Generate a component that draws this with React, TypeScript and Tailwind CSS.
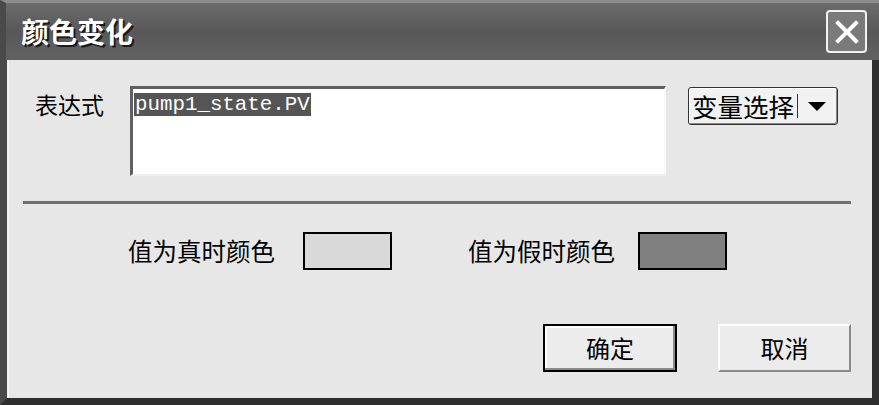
import React from "react";

const cjk = { fontFamily: '"Noto Sans CJK SC", "Noto Sans", sans-serif' };

export default function App() {
  return (
    <div className="w-[879px] h-[405px] flex flex-col bg-[#303030] overflow-hidden" style={cjk}>
      {/* Title bar */}
      <div className="h-[60px] flex items-center justify-between pl-[15px] pr-[12px] border-t-[3px] border-t-[#8c8c8c] border-l-[6px] border-l-[#4a4a4a] bg-gradient-to-b from-[#6c6c6c] via-[#585858] to-[#626262]">
        <span className="text-[28px] font-bold text-white leading-none [text-shadow:2px_2px_0_#1a1a1a] -mt-[2px]">颜色变化</span>
        <div className="w-[41px] h-[43px] rounded-[4px] border-2 border-[#f2f2f2] bg-[#7a7a7a] flex items-center justify-center">
          <svg width="26" height="26" viewBox="0 0 26 26">
            <path d="M4 4 L22 22 M22 4 L4 22" stroke="#ffffff" strokeWidth="4" strokeLinecap="square" />
          </svg>
        </div>
      </div>
      {/* Body */}
      <div className="flex-1 flex border-l-[7px] border-l-[#4a4a4a] border-r-[7px] border-r-[#2e2e2e] border-b-[7px] border-b-[#2e2e2e]">
        <div className="flex-1 bg-[#e7e7e7] border-l-2 border-l-[#f4f4f4] flex flex-col">
          {/* Row 1 */}
          <div className="flex items-start mt-[26px] pl-[26px]">
            <span className="w-[95px] mt-[4px] text-[23px] leading-[28px] text-black">表达式</span>
            <div className="w-[536px] h-[90px] bg-white border-t-[3px] border-l-[3px] border-t-[#606060] border-l-[#606060] border-r-2 border-b-2 border-r-[#f8f8f8] border-b-[#f0f0f0] pl-[1px] pt-[2px]">
              <span className="inline-block bg-[#555555] text-white text-[20.8px] leading-[23px] px-[1px]" style={{ fontFamily: '"Liberation Mono", monospace' }}>pump1_state.PV</span>
            </div>
            <div className="ml-[22px] mt-[1px] w-[150px] h-[38px] rounded-[3px] border border-[#333] bg-[#f2f2f2] shadow-[inset_-1px_-1px_0_#888,inset_1px_1px_0_#fff] flex items-center pl-[3px]">
              <span className="text-[25.5px] leading-none text-black">变量选择</span>
              <span className="w-[1px] h-[24px] bg-[#333] ml-[3px]" />
              <svg className="ml-[10px]" width="18" height="10" viewBox="0 0 18 10">
                <path d="M0 1 L18 1 L9 10 Z" fill="#000" />
              </svg>
            </div>
          </div>
          {/* Separator */}
          <div className="ml-[14px] w-[828px] h-[3px] bg-[#707070] mt-[25px]" />
          {/* Row 2 */}
          <div className="flex items-center mt-[28px] pl-[119px]">
            <span className="text-[24.5px] leading-none text-black">值为真时颜色</span>
            <div className="ml-[28px] w-[89px] h-[38px] bg-[#d9d9d9] border-2 border-black" />
            <span className="ml-[76px] text-[24.5px] leading-none text-black">值为假时颜色</span>
            <div className="ml-[23px] w-[89px] h-[38px] bg-[#808080] border-2 border-black" />
          </div>
          {/* Buttons */}
          <div className="flex mt-[54px] pl-[534px] gap-[41px]">
            <div className="w-[134px] h-[48px] border-2 border-black bg-[#ececec] shadow-[inset_-2px_-2px_0_#8a8a8a,inset_2px_2px_0_#fff] flex items-center justify-center">
              <span className="text-[24px] leading-none text-black">确定</span>
            </div>
            <div className="w-[133px] h-[48px] bg-[#ececec] border-t-2 border-l-2 border-t-white border-l-white border-r-2 border-b-2 border-r-[#8a8a8a] border-b-[#8a8a8a] flex items-center justify-center">
              <span className="text-[24px] leading-none text-black">取消</span>
            </div>
          </div>
        </div>
      </div>
    </div>
  );
}
